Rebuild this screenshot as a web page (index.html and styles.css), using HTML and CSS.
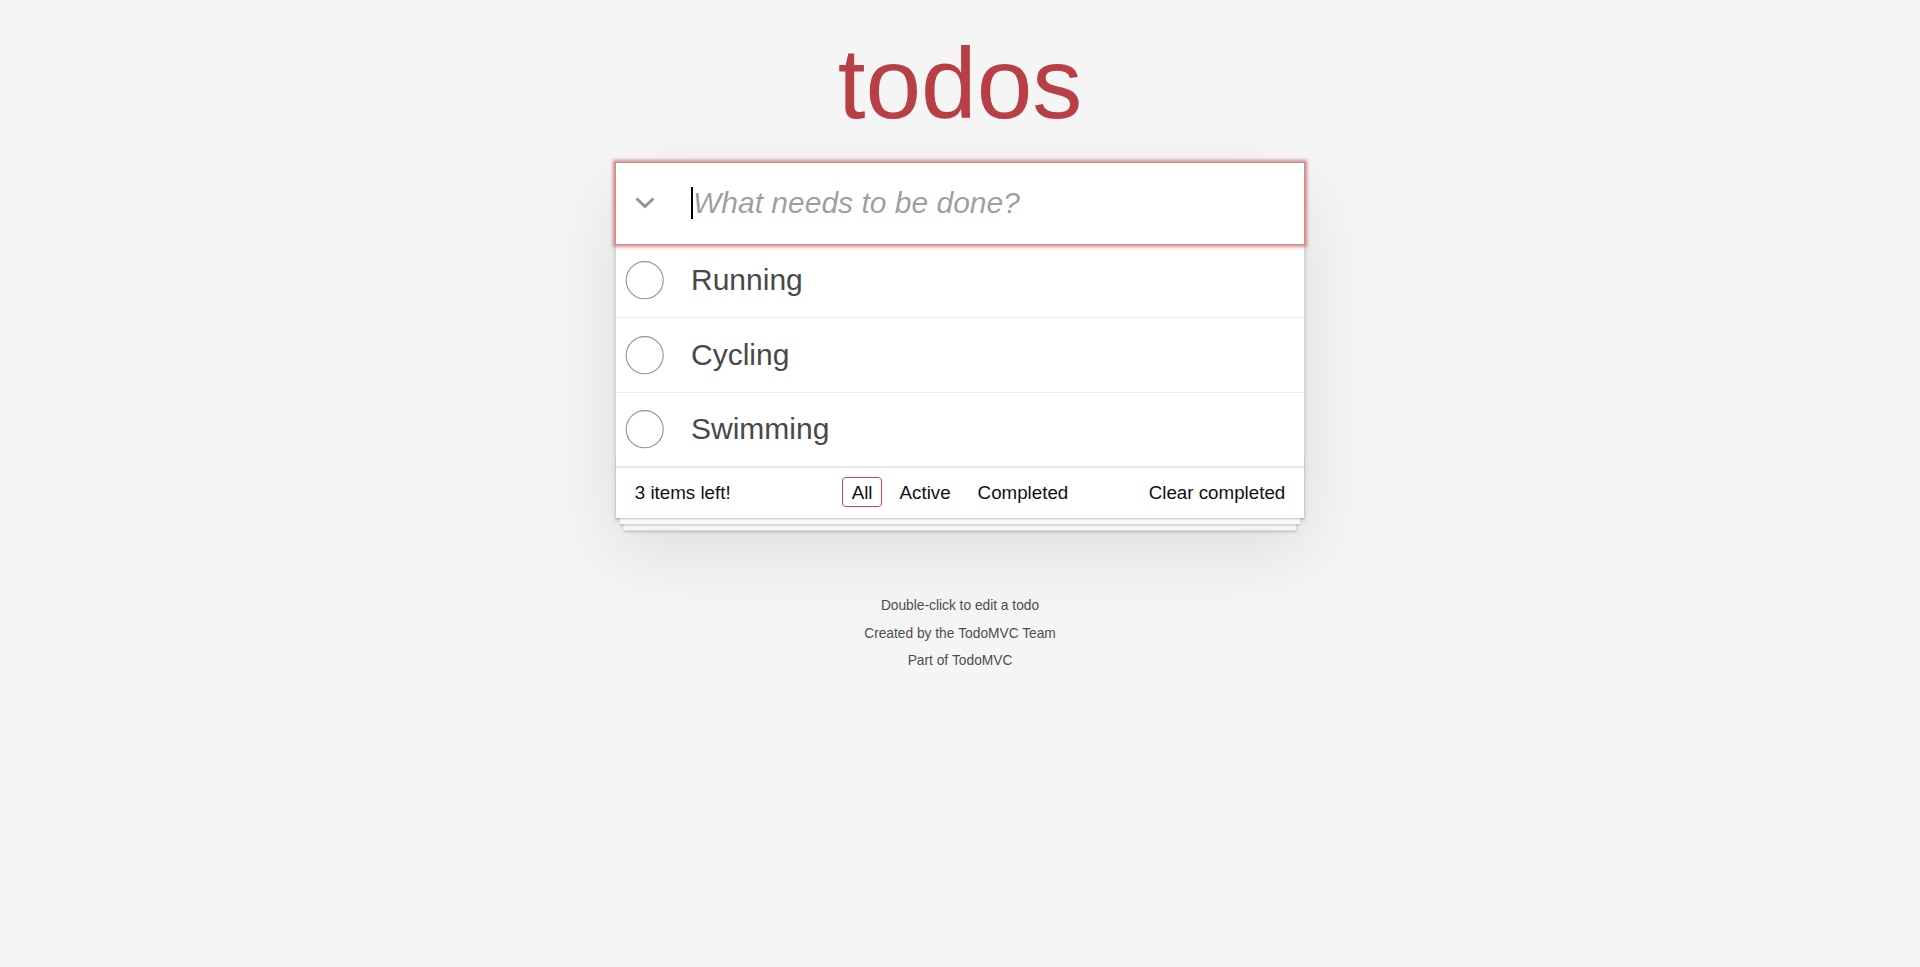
FILE: index.html
```html
<!DOCTYPE html>
<html lang="en">
<head>
<meta charset="utf-8">
<title>TodoMVC</title>
<link rel="stylesheet" href="styles.css">
</head>
<body>
<div class="page">
  <header class="title">
    <h1>todos</h1>
  </header>
  <section class="todoapp">
    <div class="new-row">
      <div class="toggle-all">
        <svg width="22" height="14" viewBox="0 0 22 14"><polyline points="2.5,2.5 11,10.5 19.5,2.5" fill="none" stroke="#949494" stroke-width="3"/></svg>
      </div>
      <div class="new-todo"><span class="caret"></span><span class="placeholder">What needs to be done?</span></div>
    </div>
    <ul class="todo-list">
      <li>
        <span class="toggle"><svg width="50" height="50" viewBox="-10 -18 100 135"><circle cx="50" cy="50" r="50" fill="none" stroke="#949494" stroke-width="3"/></svg></span>
        <span class="label">Running</span>
      </li>
      <li>
        <span class="toggle"><svg width="50" height="50" viewBox="-10 -18 100 135"><circle cx="50" cy="50" r="50" fill="none" stroke="#949494" stroke-width="3"/></svg></span>
        <span class="label">Cycling</span>
      </li>
      <li>
        <span class="toggle"><svg width="50" height="50" viewBox="-10 -18 100 135"><circle cx="50" cy="50" r="50" fill="none" stroke="#949494" stroke-width="3"/></svg></span>
        <span class="label">Swimming</span>
      </li>
    </ul>
    <footer class="footer">
      <span class="todo-count">3 items left!</span>
      <ul class="filters">
        <li><a class="selected">All</a></li>
        <li><a>Active</a></li>
        <li><a>Completed</a></li>
      </ul>
      <span class="clear-completed">Clear completed</span>
    </footer>
  </section>
  <footer class="info">
    <p>Double-click to edit a todo</p>
    <p>Created by the <a>TodoMVC Team</a></p>
    <p>Part of <a>TodoMVC</a></p>
  </footer>
</div>
</body>
</html>
```

FILE: styles.css
```css
html {
  margin: 0;
  padding: 0;
  background: #f5f5f5;
}

body {
  margin: 0;
  padding: 0;
  overflow: visible;
  font-family: "Liberation Sans", Arial, sans-serif;
  font-size: 17.5px;
  line-height: 24.5px;
  font-weight: 300;
  color: #111111;
}

.page {
  width: 688px;
  margin: 0 auto;
  overflow: visible;
}

.title h1 {
  margin: 33px 0 29.5px;
  font-size: 100px;
  line-height: 100px;
  font-weight: 200;
  text-align: center;
  color: #b83f45;
}

.todoapp {
  position: relative;
  background: #fff;
  margin: 0 0 50px;
  overflow: visible;
  box-shadow: 0 2.5px 5px 0 rgba(0, 0, 0, 0.2), 0 31.25px 70px 0 rgba(0, 0, 0, 0.1);
}

.new-row {
  display: flex;
  align-items: center;
  height: 81px;
  box-sizing: border-box;
  background: #fff;
  box-shadow: 0 0 0 1px #d38a8a, 0 0 3px 3px rgba(207, 125, 125, 0.85);
  position: relative;
  z-index: 2;
}

.toggle-all {
  width: 56px;
  height: 81px;
  display: flex;
  align-items: center;
  justify-content: center;
  flex: none;
}

.toggle-all svg {
  display: block;
  margin-left: 1px;
}

.new-todo {
  flex: 1;
  display: flex;
  align-items: center;
  padding: 0 20px 0 19px;
  font-size: 30px;
  line-height: 42px;
}

.caret {
  display: inline-block;
  width: 2px;
  height: 32px;
  background: #000;
}

.placeholder {
  font-style: italic;
  font-weight: 400;
  color: rgba(0, 0, 0, 0.4);
}

.todo-list {
  margin: 0;
  padding: 0;
  list-style: none;
}

.todo-list li {
  display: flex;
  align-items: center;
  border-bottom: 1px solid #ededed;
  font-size: 30px;
}

.toggle {
  width: 50px;
  height: 50px;
  flex: none;
}

.toggle svg {
  display: block;
}

.label {
  display: block;
  padding: 18.75px 18.75px 18.75px 25px;
  line-height: 36px;
  font-weight: 400;
  color: #484848;
}

.footer {
  position: relative;
  display: grid;
  grid-template-columns: 1fr auto 1fr;
  align-items: start;
  padding: 12.5px 18.75px;
  height: 25px;
  font-size: 18.75px;
  line-height: 24.5px;
  border-top: 1px solid #e6e6e6;
}

.footer::before {
  content: "";
  position: absolute;
  right: 0;
  bottom: 0;
  left: 0;
  height: 62.5px;
  overflow: hidden;
  pointer-events: none;
  box-shadow: 0 1.25px 1.25px rgba(0, 0, 0, 0.2),
    0 10px 0 -3.75px #f6f6f6,
    0 11.25px 1.25px -3.75px rgba(0, 0, 0, 0.2),
    0 20px 0 -7.5px #f6f6f6,
    0 21.25px 2.5px -7.5px rgba(0, 0, 0, 0.2);
}

.todo-count {
  text-align: left;
  position: relative;
}

.filters {
  display: flex;
  margin: 0;
  padding: 0;
  list-style: none;
  position: relative;
}

.filters li a {
  margin: 0 3.75px;
  padding: 3.75px 8.75px;
  border: 1.25px solid transparent;
  border-radius: 3.75px;
  color: inherit;
}

.filters li a.selected {
  border-color: #ce4646;
}

.clear-completed {
  text-align: right;
  position: relative;
}

.info {
  margin: 81.25px auto 0;
  color: #4d4d4d;
  font-size: 13.75px;
  text-align: center;
  text-shadow: 0 1px 0 rgba(255, 255, 255, 0.5);
}

.info p {
  margin: 13.75px 0;
  line-height: 1;
}

.info a {
  color: inherit;
  font-weight: 400;
}
```
